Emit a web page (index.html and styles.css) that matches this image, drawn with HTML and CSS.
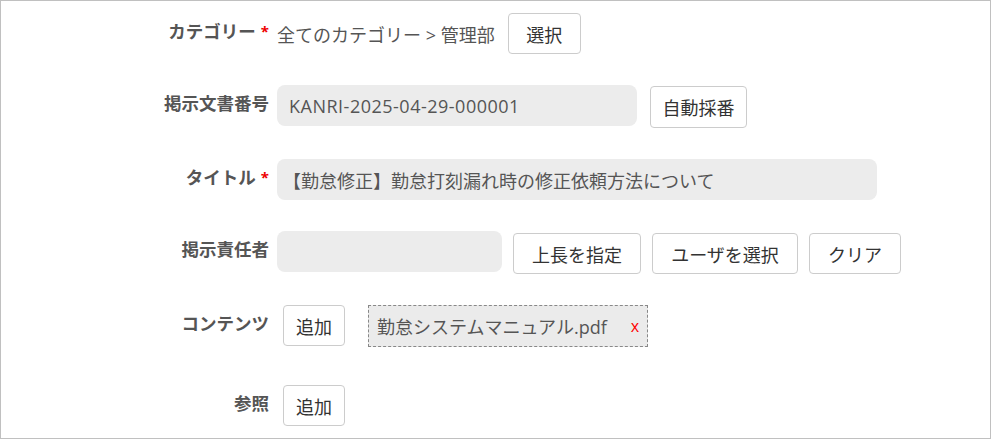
FILE: index.html
```html
<!DOCTYPE html>
<html lang="ja">
<head>
  <meta charset="UTF-8">
  <title>掲示文書登録</title>
  <link rel="stylesheet" href="styles.css">
</head>
<body>
  <div class="form">

    <div class="row">
      <label class="label">カテゴリー<span class="req">*</span></label>
      <div class="field">
        <span class="path">全てのカテゴリー &gt; 管理部</span>
        <button class="btn btn-select">選択</button>
      </div>
    </div>

    <div class="row">
      <label class="label">掲示文書番号</label>
      <div class="field field-no">
        <div class="input input-no">KANRI-2025-04-29-000001</div>
        <button class="btn btn-auto">自動採番</button>
      </div>
    </div>

    <div class="row">
      <label class="label">タイトル<span class="req">*</span></label>
      <div class="field">
        <div class="input input-title">【勤怠修正】勤怠打刻漏れ時の修正依頼方法について</div>
      </div>
    </div>

    <div class="row">
      <label class="label">掲示責任者</label>
      <div class="field field-owner">
        <div class="input input-owner"></div>
        <button class="btn btn-boss">上長を指定</button>
        <button class="btn btn-user">ユーザを選択</button>
        <button class="btn btn-clear">クリア</button>
      </div>
    </div>

    <div class="row">
      <label class="label">コンテンツ</label>
      <div class="field field-add">
        <button class="btn btn-add">追加</button>
        <div class="file">
          <span class="file-name">勤怠システムマニュアル.pdf</span>
          <span class="file-del">x</span>
        </div>
      </div>
    </div>

    <div class="row row-last">
      <label class="label">参照</label>
      <div class="field field-add">
        <button class="btn btn-add">追加</button>
      </div>
    </div>

  </div>
</body>
</html>
```

FILE: styles.css
```css
html, body {
  margin: 0;
  padding: 0;
  background: #fff;
}
body {
  font-family: "Open Sans", "Noto Sans CJK JP", sans-serif;
  font-size: 18px;
  color: #555;
}
.form {
  box-sizing: border-box;
  width: 991px;
  height: 439px;
  border: 1px solid #c0c0c0;
  padding: 12px 0 0 8px;
  overflow: hidden;
}
.row {
  display: flex;
  align-items: flex-start;
  gap: 8px;
  margin-bottom: 31px;
}
.row-last {
  margin-top: 38px;
}
.label {
  width: 260px;
  flex: none;
  text-align: right;
  font-weight: bold;
  font-size: 17.5px;
  color: #555;
  line-height: 24px;
  padding-top: 6px;
}
.req {
  color: #e00;
  font-size: 15px;
  margin-left: 5px;
  vertical-align: top;
}
.field {
  display: flex;
  align-items: center;
  gap: 13px;
}
.path {
  color: #555;
}
.btn {
  box-sizing: border-box;
  height: 41px;
  background: #fff;
  border: 1px solid #ccc;
  border-radius: 4px;
  font-family: "Open Sans", "Noto Sans CJK JP", sans-serif;
  font-size: 18px;
  color: #333;
  padding: 0;
  cursor: pointer;
}
.btn-select { width: 73px; }
.btn-auto { width: 97px; height: 42px; margin-top: 1px; }
.btn-boss { width: 128px; }
.btn-user { width: 146px; }
.btn-clear { width: 92px; }
.btn-add { width: 62px; }
.input {
  box-sizing: border-box;
  height: 41px;
  background: #ececec;
  border-radius: 8px;
  padding: 0 12px;
  display: flex;
  align-items: center;
  color: #555;
  white-space: nowrap;
}
.field-no {
  align-items: flex-start;
}
.input-no { width: 360px; letter-spacing: 0.5px; }
.input-title { width: 600px; padding-left: 6px; }
.input-owner { width: 225px; }
.field-owner {
  gap: 11px;
  align-items: flex-start;
}
.field-owner .btn {
  margin-top: 2px;
}
.field-add {
  margin-left: 6px;
  gap: 23px;
  align-items: flex-start;
}
.file {
  box-sizing: border-box;
  width: 280px;
  height: 42px;
  border: 1px dashed #888;
  background: #ebebeb;
  display: flex;
  align-items: center;
  justify-content: space-between;
  padding: 0 8px 0 8px;
}
.file-name {
  color: #555;
}
.file-del {
  color: #f00;
  font-size: 16px;
}
```
